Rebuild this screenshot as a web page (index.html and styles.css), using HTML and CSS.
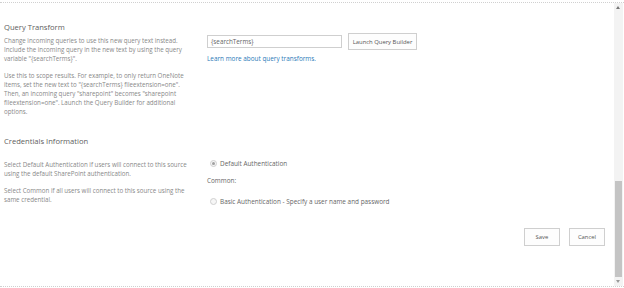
FILE: index.html
```html
<!DOCTYPE html>
<html>
<head>
<meta charset="utf-8">
<link rel="stylesheet" href="styles.css">
</head>
<body>
<div class="frame">
  <div class="page">
    <div class="section qt">
      <div class="desc">
        <h2 class="title">Query Transform</h2>
        <p>Change incoming queries to use this new query text instead. Include the incoming query in the new text by using the query variable "{searchTerms}".</p>
        <p>Use this to scope results. For example, to only return OneNote items, set the new text to "{searchTerms} fileextension=one". Then, an incoming query "sharepoint" becomes "sharepoint fileextension=one". Launch the Query Builder for additional options.</p>
      </div>
      <div class="ctrl qt-ctrl">
        <div class="qt-row">
          <div class="input">{searchTerms}</div>
          <div class="btn launch">Launch Query Builder</div>
        </div>
        <a class="link">Learn more about query transforms.</a>
      </div>
    </div>
    <div class="section cred">
      <div class="desc">
        <h2 class="title">Credentials Information</h2>
        <p>Select Default Authentication if users will connect to this source using the default SharePoint authentication.</p>
        <p>Select Common if all users will connect to this source using the same credential.</p>
      </div>
      <div class="ctrl cred-ctrl">
        <div class="radio-row"><span class="radio checked"></span>Default Authentication</div>
        <div class="common">Common:</div>
        <div class="radio-row"><span class="radio"></span>Basic Authentication - Specify a user name and password</div>
      </div>
    </div>
    <div class="actions">
      <div class="btn action">Save</div>
      <div class="btn action">Cancel</div>
    </div>
  </div>
  <div class="scrollbar">
    <div class="arrow up"></div>
    <div class="track"><div class="thumb"></div></div>
    <div class="arrow down"></div>
  </div>
</div>
</body>
</html>
```
FILE: styles.css
```css
html, body {
  margin: 0;
  padding: 0;
  background: #fff;
}
body {
  width: 624px;
  height: 288px;
  overflow: hidden;
  font-family: "Open Sans", "Noto Sans", sans-serif;
  color: #666;
}
.frame {
  display: flex;
  margin-top: 2px;
  border-top: 1px dotted #d0d0d0;
  border-bottom: 1px dotted #d0d0d0;
  box-sizing: border-box;
  height: 285px;
}
.page {
  flex: 1;
  padding-left: 4px;
}
.section {
  display: flex;
}
.desc {
  width: 190px;
  flex: none;
}
.title {
  margin: 0;
  font-size: 7.6px;
  font-weight: normal;
  color: #606060;
  line-height: 10px;
}
.desc p {
  margin: 0;
  font-size: 6.2px;
  line-height: 9px;
  color: #888;
}
.qt {
  padding-top: 19px;
}
.qt .title { margin-bottom: 4px; }
.qt .desc p + p { margin-top: 8px; }
.ctrl {
  margin-left: 13px;
}
.qt-ctrl {
  padding-top: 11px;
}
.qt-row {
  display: flex;
  align-items: center;
  gap: 6px;
}
.input {
  width: 135px;
  height: 13px;
  border: 1px solid #cfcfcf;
  box-sizing: border-box;
  font-size: 6.3px;
  line-height: 11px;
  padding-left: 3px;
  color: #666;
}
.btn {
  border: 1px solid #cfcfcf;
  background: #fdfdfd;
  box-sizing: border-box;
  font-size: 5.9px;
  color: #555;
  display: flex;
  align-items: center;
  justify-content: center;
}
.launch {
  width: 69px;
  height: 17px;
}
.link {
  display: block;
  margin-top: 4px;
  font-size: 6.4px;
  color: #2a7ab8;
  line-height: 9px;
}
.cred {
  padding-top: 20px;
}
.cred .title { margin-bottom: 14px; }
.cred .desc p + p { margin-top: 8px; }
.cred-ctrl {
  padding-top: 23px;
}
.radio-row {
  display: flex;
  align-items: center;
  font-size: 6.4px;
  color: #666;
  line-height: 9px;
  padding-left: 3px;
}
.radio {
  width: 5px;
  height: 5px;
  border-radius: 50%;
  border: 1px solid #d0d0d0;
  margin-right: 3px;
  box-sizing: content-box;
  position: relative;
  background: #f6f6f6;
}
.radio.checked::after {
  content: "";
  position: absolute;
  left: 1px;
  top: 1px;
  width: 3px;
  height: 3px;
  border-radius: 50%;
  background: #a0a0a0;
}
.common {
  font-size: 6.4px;
  color: #666;
  line-height: 9px;
  margin-top: 8px;
  margin-bottom: 12px;
}
.actions {
  display: flex;
  justify-content: flex-end;
  gap: 9px;
  margin-top: 22px;
  padding-right: 9px;
}
.action {
  width: 36px;
  height: 18px;
}
.scrollbar {
  width: 9px;
  margin-right: 1px;
  display: flex;
  flex-direction: column;
  background: #f3f3f3;
}
.arrow {
  height: 9px;
  position: relative;
}
.arrow.up::after, .arrow.down::after {
  content: "";
  position: absolute;
  left: 2px;
  border-left: 2.5px solid transparent;
  border-right: 2.5px solid transparent;
}
.arrow.up::after {
  top: 3px;
  border-bottom: 3px solid #777;
}
.arrow.down::after {
  top: 3px;
  border-top: 3px solid #999;
}
.track {
  flex: 1;
  display: flex;
  flex-direction: column;
  justify-content: flex-end;
  padding: 0 1px;
}
.thumb {
  height: 96px;
  background: #c4c4c4;
}
```
